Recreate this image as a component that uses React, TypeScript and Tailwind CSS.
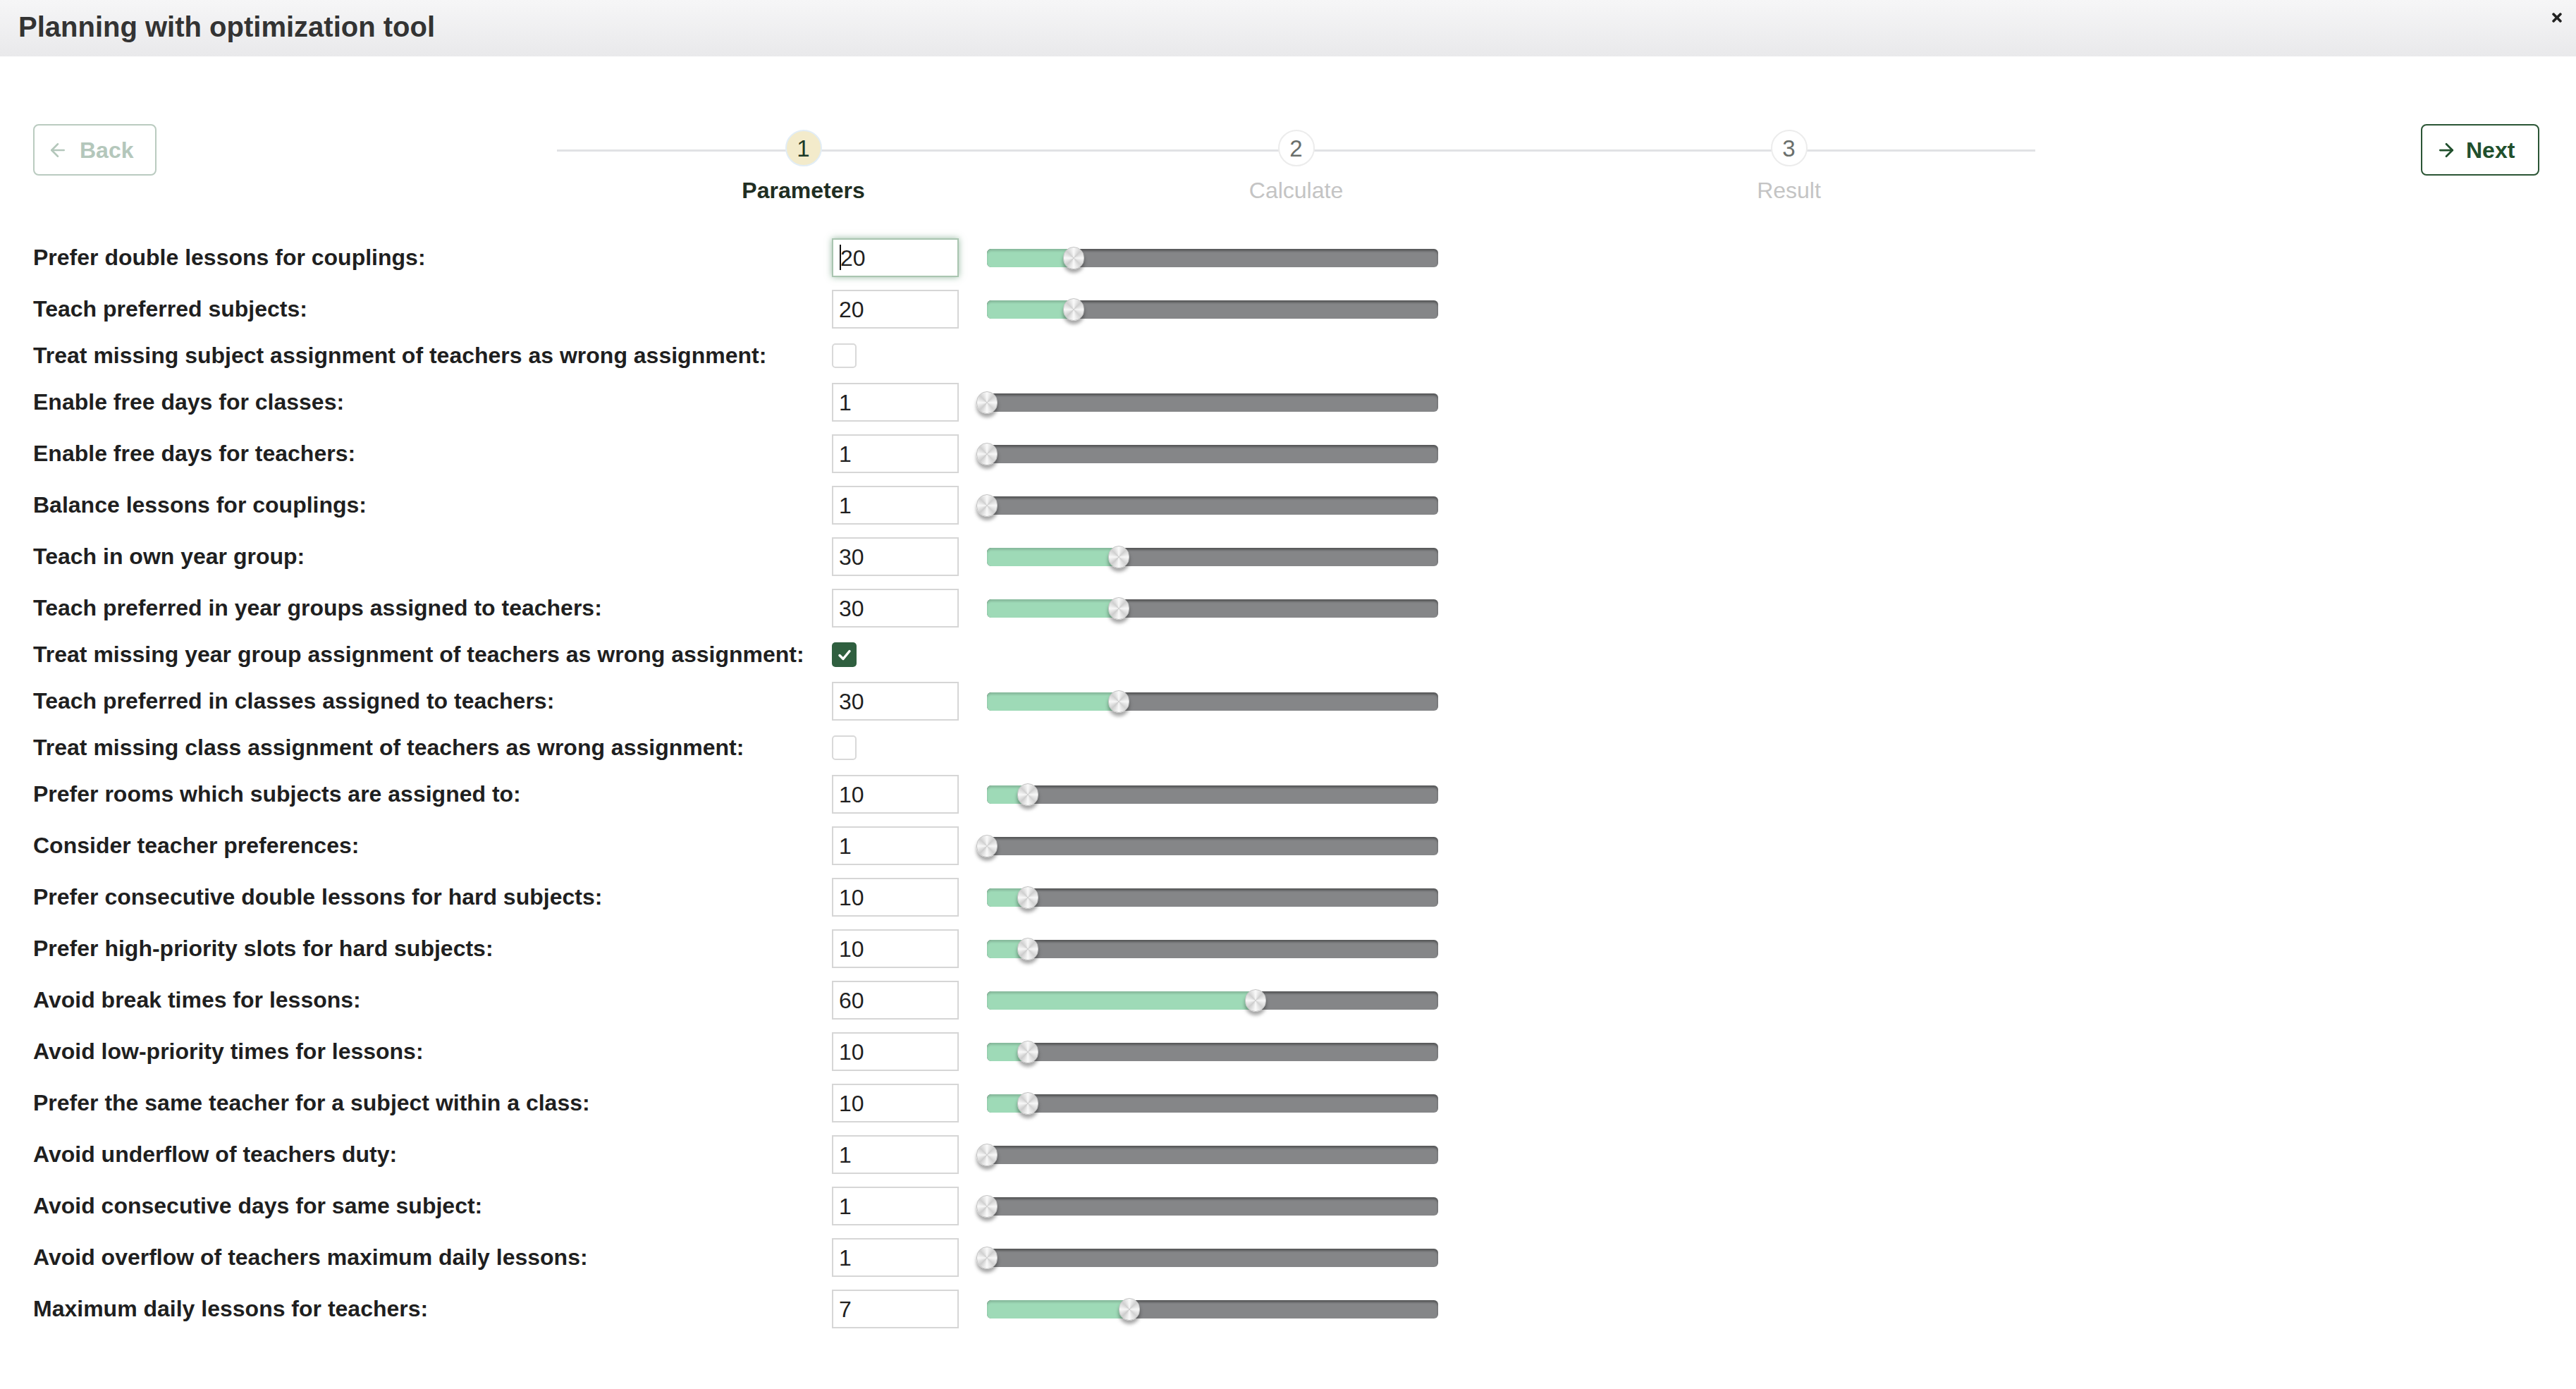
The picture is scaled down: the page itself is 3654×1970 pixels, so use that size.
import React from "react";
import { ArrowLeft, ArrowRight } from "lucide-react";
import { FaTimes } from "react-icons/fa";

type Row =
  | { label: string; kind: "slider"; value: number; max?: number; focused?: boolean }
  | { label: string; kind: "check"; checked: boolean };

const rows: Row[] = [
  { label: "Prefer double lessons for couplings:", kind: "slider", value: 20, focused: true },
  { label: "Teach preferred subjects:", kind: "slider", value: 20 },
  { label: "Treat missing subject assignment of teachers as wrong assignment:", kind: "check", checked: false },
  { label: "Enable free days for classes:", kind: "slider", value: 1 },
  { label: "Enable free days for teachers:", kind: "slider", value: 1 },
  { label: "Balance lessons for couplings:", kind: "slider", value: 1 },
  { label: "Teach in own year group:", kind: "slider", value: 30 },
  { label: "Teach preferred in year groups assigned to teachers:", kind: "slider", value: 30 },
  { label: "Treat missing year group assignment of teachers as wrong assignment:", kind: "check", checked: true },
  { label: "Teach preferred in classes assigned to teachers:", kind: "slider", value: 30 },
  { label: "Treat missing class assignment of teachers as wrong assignment:", kind: "check", checked: false },
  { label: "Prefer rooms which subjects are assigned to:", kind: "slider", value: 10 },
  { label: "Consider teacher preferences:", kind: "slider", value: 1 },
  { label: "Prefer consecutive double lessons for hard subjects:", kind: "slider", value: 10 },
  { label: "Prefer high-priority slots for hard subjects:", kind: "slider", value: 10 },
  { label: "Avoid break times for lessons:", kind: "slider", value: 60 },
  { label: "Avoid low-priority times for lessons:", kind: "slider", value: 10 },
  { label: "Prefer the same teacher for a subject within a class:", kind: "slider", value: 10 },
  { label: "Avoid underflow of teachers duty:", kind: "slider", value: 1 },
  { label: "Avoid consecutive days for same subject:", kind: "slider", value: 1 },
  { label: "Avoid overflow of teachers maximum daily lessons:", kind: "slider", value: 1 },
  { label: "Maximum daily lessons for teachers:", kind: "slider", value: 7, max: 20 },
];

function Slider({ value, max = 100 }: { value: number; max?: number }) {
  const pct = ((value - 1) / (max - 1)) * 100;
  return (
    <div className="relative ml-[40px] h-[26px] w-[640px] rounded-[6px] bg-[#858688] shadow-[inset_0_3px_3px_rgba(0,0,0,0.35)]">
      <div
        className="h-full rounded-l-[6px] bg-[#9edab7] shadow-[inset_0_3px_3px_rgba(0,0,0,0.15)]"
        style={{ width: `${pct}%` }}
      />
      <div
        className="absolute top-1/2 h-[32px] w-[30px] -translate-x-1/2 -translate-y-1/2 rounded-full border border-[#c4c4c4] bg-[conic-gradient(#fafafa,#cfcfcf,#f7f7f7,#d2d2d2,#fafafa,#cdcdcd,#f8f8f8,#d0d0d0,#fafafa)] shadow-[0_5px_5px_rgba(0,0,0,0.35)]"
        style={{ left: `${pct}%` }}
      />
    </div>
  );
}

function Checkbox({ checked }: { checked: boolean }) {
  return checked ? (
    <div className="flex h-[35px] w-[35px] items-center justify-center rounded-[5px] bg-[#2f5f3f]">
      <svg width="20" height="18" viewBox="0 0 20 18">
        <path d="M3 9.5 L8 14.5 L17 3.5" fill="none" stroke="white" strokeWidth="3.5" strokeLinecap="round" strokeLinejoin="round" />
      </svg>
    </div>
  ) : (
    <div className="h-[35px] w-[35px] rounded-[5px] border-2 border-[#d9d9d9] bg-white" />
  );
}

function Step({ n, label, active }: { n: number; label: string; active?: boolean }) {
  return (
    <div className="relative z-10 flex flex-col items-center">
      <div
        className={
          active
            ? "mt-[8px] flex h-[52px] w-[52px] items-center justify-center rounded-full border-2 border-[#e2edf5] bg-[#f3ebcb] text-[33px] leading-none text-[#1d3a28]"
            : "mt-[8px] flex h-[52px] w-[52px] items-center justify-center rounded-full border-2 border-[#ececec] bg-white text-[33px] leading-none text-[#6a6f6c]"
        }
      >
        {n}
      </div>
      <div
        className={
          active
            ? "mt-[16px] text-[32px] font-bold leading-[37px] text-[#1f2e22]"
            : "mt-[16px] text-[32px] leading-[37px] text-[#c4c4c4]"
        }
      >
        {label}
      </div>
    </div>
  );
}

export default function App() {
  return (
    <div className="min-h-screen w-full bg-white font-['Liberation_Sans',Arial,sans-serif] text-[#222]">
      <div className="flex h-[80px] items-start justify-between bg-gradient-to-b from-[#f6f6f7] to-[#e9e9eb] pl-[26px] pr-[17px]">
        <div className="mt-[15px] text-[40px] font-bold leading-[46px] text-[#333]">
          Planning with optimization tool
        </div>
        <div className="mt-[15px] text-[#222]">
          <FaTimes size={20} />
        </div>
      </div>

      <div className="pl-[47px] pr-[52px] pt-[96px]">
        <div className="flex items-start">
          <button className="flex h-[73px] w-[175px] items-center gap-[16px] rounded-[8px] border-2 border-[#bacbc0] pl-[18px] text-[32px] font-bold text-[#b4c7bb]">
            <ArrowLeft size={30} strokeWidth={2} />
            <span>Back</span>
          </button>
          <div className="relative ml-[568px] grid w-[2097px] grid-cols-3">
            <div className="absolute left-0 right-0 top-[36px] h-[3px] bg-[#e1e2e5]" />
            <Step n={1} label="Parameters" active />
            <Step n={2} label="Calculate" />
            <Step n={3} label="Result" />
          </div>
          <button className="ml-auto flex h-[73px] w-[168px] items-center gap-[13px] rounded-[8px] border-2 border-[#2b5535] pl-[19px] text-[32px] font-bold text-[#21502d]">
            <ArrowRight size={30} strokeWidth={2.2} />
            <span>Next</span>
          </button>
        </div>

        <div className="mt-[49px] flex flex-col gap-[18px] pb-[60px]">
          {rows.map((r, i) => (
            <div key={i} className={r.kind === "slider" ? "flex h-[55px] items-center" : "flex h-[41px] items-center"}>
              <div className="w-[1133px] text-[32px] font-bold leading-[37px] text-[#1f1f1f]">{r.label}</div>
              {r.kind === "slider" ? (
                <>
                  <div
                    className={
                      r.focused
                        ? "relative flex h-[55px] w-[180px] items-center border-2 border-[#a9c5b0] bg-white pl-[10px] text-[32px] text-[#1f1f1f] shadow-[0_0_9px_rgba(70,130,90,0.55)]"
                        : "flex h-[55px] w-[180px] items-center border-2 border-[#d6d6d6] bg-white pl-[8px] text-[32px] text-[#1f1f1f]"
                    }
                  >
                    {r.focused && <span className="absolute left-[9px] top-[7px] h-[36px] w-[2px] bg-[#111]" />}
                    {r.value}
                  </div>
                  <Slider value={r.value} max={r.max} />
                </>
              ) : (
                <Checkbox checked={r.checked} />
              )}
            </div>
          ))}
        </div>
      </div>
    </div>
  );
}
